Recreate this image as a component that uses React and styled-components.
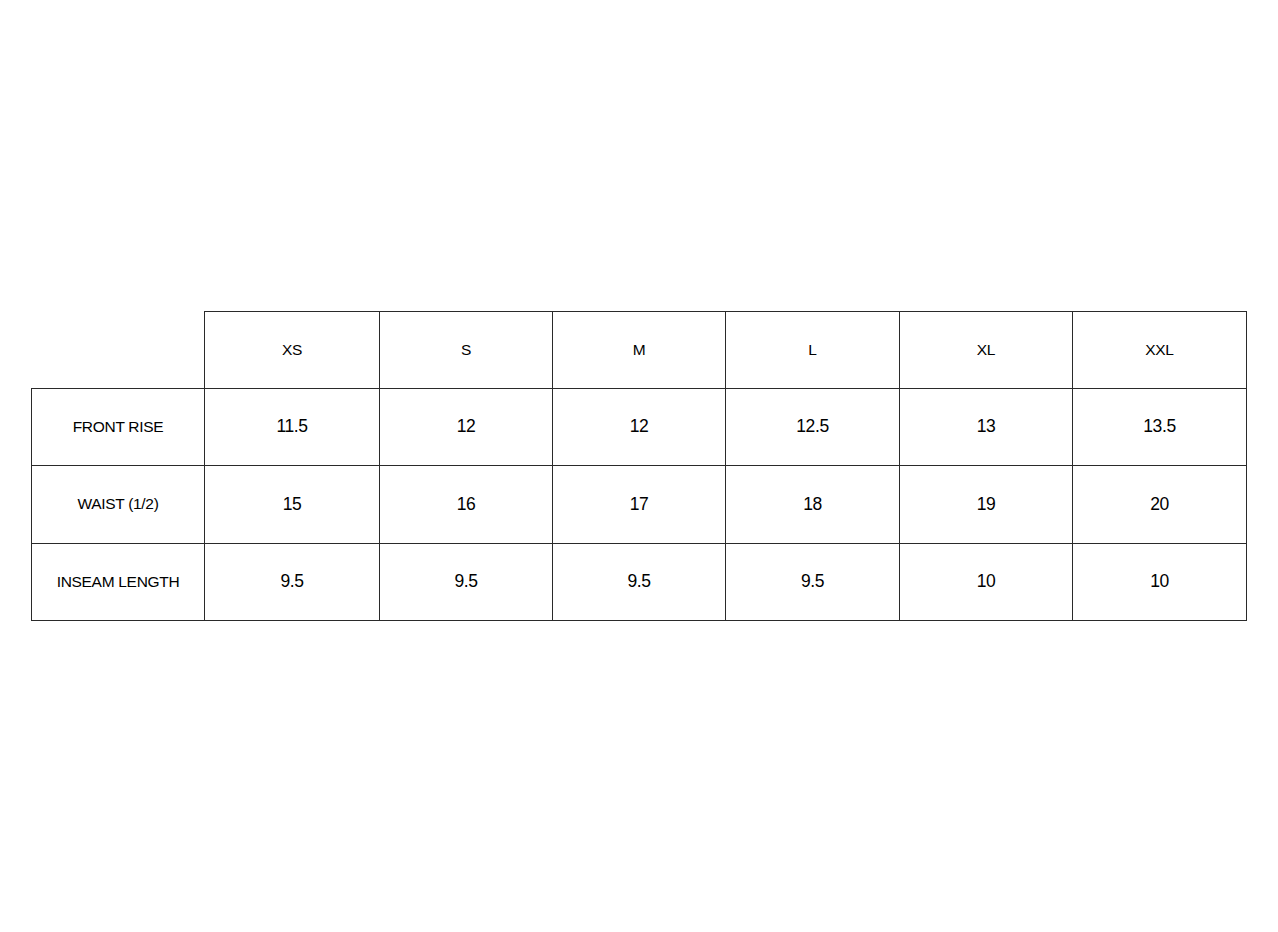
import React from "react";
import styled, { createGlobalStyle } from "styled-components";

const Global = createGlobalStyle`
  html, body { margin: 0; padding: 0; background: #fff; }
  body { font-family: "Liberation Sans", Arial, sans-serif; color: #000; }
`;

const Page = styled.div`
  min-height: 932px;
  display: flex;
  align-items: center;
  justify-content: center;
`;

const Table = styled.table`
  border-collapse: collapse;
  width: 1216px;
  table-layout: fixed;
  margin-top: -1px;
`;

const LabelCol = styled.col`
  width: 173px;
`;

const SizeCol = styled.col`
  width: ${(p) => p.$w}px;
`;

const Row = styled.tr`
  height: ${(p) => p.$h}px;
`;

const Cell = styled.td`
  border: 1px solid #2a2a2a;
  padding: 0;
  text-align: center;
  vertical-align: middle;
  color: #000;
  font-size: ${(p) => (p.$big ? "17.5px" : "15.5px")};
  letter-spacing: ${(p) => (p.$big ? "-0.4px" : "-0.3px")};
`;

const HeadCell = styled(Cell)`
  font-size: 15.5px;
  letter-spacing: -0.3px;
`;

const Blank = styled.td`
  border: none;
  padding: 0;
`;

const sizes = [
  ["XS", 175],
  ["S", 173],
  ["M", 173],
  ["L", 174],
  ["XL", 173],
  ["XXL", 174],
];
const rows = [
  ["FRONT RISE", 77, ["11.5", "12", "12", "12.5", "13", "13.5"]],
  ["WAIST (1/2)", 78, ["15", "16", "17", "18", "19", "20"]],
  ["INSEAM LENGTH", 77, ["9.5", "9.5", "9.5", "9.5", "10", "10"]],
];

export default function App() {
  return (
    <>
      <Global />
      <Page>
        <Table>
          <colgroup>
            <LabelCol />
            {sizes.map(([s, w]) => (
              <SizeCol key={s} $w={w} />
            ))}
          </colgroup>
          <tbody>
            <Row $h={77}>
              <Blank />
              {sizes.map(([s]) => (
                <HeadCell key={s}>{s}</HeadCell>
              ))}
            </Row>
            {rows.map(([label, h, vals]) => (
              <Row key={label} $h={h}>
                <Cell>{label}</Cell>
                {vals.map((v, i) => (
                  <Cell key={i} $big>
                    {v}
                  </Cell>
                ))}
              </Row>
            ))}
          </tbody>
        </Table>
      </Page>
    </>
  );
}
